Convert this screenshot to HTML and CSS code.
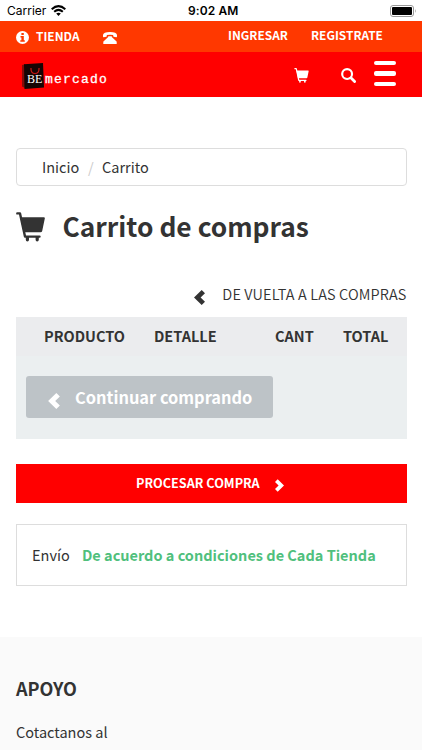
FILE: index.html
```html
<!DOCTYPE html>
<html lang="es">
<head>
<meta charset="utf-8">
<title>Carrito de compras</title>
<link rel="stylesheet" href="styles.css">
</head>
<body>
<svg width="0" height="0" class="defs">
  <symbol id="cart" viewBox="0 0 29 30"><path d="M1.3 1.4H4L9 24.6H23.5" fill="none" stroke="currentColor" stroke-width="2.4" stroke-linecap="round" stroke-linejoin="round"/><path d="M4.3 5.2H27.8Q29.1 5.2 28.8 6.4L26.2 19Q25.9 20.3 24.5 20.3H7.5ZM9.8 25H13V27.8A1.6 1.6 0 0 1 9.8 27.8ZM19.6 25H22.8V27.8A1.6 1.6 0 0 1 19.6 27.8Z" fill="currentColor"/></symbol>
  <symbol id="chevron" viewBox="0 0 11 15"><path d="M7.7 0L11 3.2L6.6 7.5L11 11.8L7.7 15L0 7.5Z" fill="currentColor"/></symbol>
</svg>
<div class="status">
  <span class="carrier">Carrier</span>
  <svg class="wifi" viewBox="0 0 15 11"><g fill="none" stroke="#000" stroke-width="2"><path d="M.7 4.2Q7.5-2 14.3 4.2"/><path d="M3.2 6.8Q7.5 3 11.8 6.8"/></g><path d="M5.2 8.6Q7.5 6.8 9.8 8.6L7.5 11Z"/></svg>
  <span class="time">9:02 AM</span>
  <svg class="battery" viewBox="0 0 27 12"><rect x=".5" y=".5" width="23" height="11" rx="2.5" fill="#fff" stroke="#999"/><rect x="2" y="2" width="20" height="8" rx="1"/><path d="M25 4Q26.6 6 25 8Z" fill="#999"/></svg>
</div>
<div class="topbar">
  <svg class="info" viewBox="0 0 13 13"><circle cx="6.5" cy="6.5" r="6.5" fill="#fff"/><path d="M5.4 2H7.8V4H5.4ZM4.5 5H7.8V9.2H8.8V10.7H4.3V9.2H5.4V6.4H4.5Z" fill="#ff3800"/></svg>
  <span class="tienda">TIENDA</span>
  <svg class="phone" viewBox="0 0 14 12"><path d="M0 4.6V3Q.3 0 7 0T14 3V4.6Q14 5.3 13.2 5.2L10.8 4.8Q10.2 4.7 10.2 4V3Q7 2.3 3.8 3V4Q3.8 4.7 3.2 4.8L.8 5.2Q0 5.3 0 4.6ZM5.2 4.2H8.8V5L13.3 9.2Q13.7 9.5 13.7 10V12H.3V10Q.3 9.5.7 9.2L5.2 5Z" fill="#fff"/></svg>
  <span class="login">INGRESAR</span>
  <span class="register">REGISTRATE</span>
</div>
<header class="header">
  <div class="logo">
    <svg class="bag" viewBox="0 0 22 26"><path d="M0 2L3 1.2V25L0 23.5Z" fill="#860b09"/><path d="M2 1.2L21 0L22 24.5L2.5 26Z" fill="#160504"/><path d="M9 5V6Q9 10.5 13 10.5T17 6V5" fill="none" stroke="#cc1715" stroke-width="1.2"/></svg>
    <span class="be">BE</span><span class="mercado">mercado</span>
  </div>
  <svg class="navcart"><use href="#cart"/></svg>
  <svg class="search" viewBox="0 0 14 14"><circle cx="5.7" cy="5.7" r="4.6" fill="none" stroke="#fff" stroke-width="2"/><path d="M9.2 9.2L12.7 12.7" stroke="#fff" stroke-width="2.6" stroke-linecap="round"/></svg>
  <div class="burger"><i></i><i></i><i></i></div>
</header>
<main>
  <nav class="crumb"><span class="inicio">Inicio</span><span class="slash">/</span><span class="here">Carrito</span></nav>
  <h1><svg class="bigcart"><use href="#cart"/></svg><span>Carrito de compras</span></h1>
  <div class="back"><svg class="chev"><use href="#chevron"/></svg><span>DE VUELTA A LAS COMPRAS</span></div>
  <section class="table">
    <div class="thead"><span class="c1">PRODUCTO</span><span class="c2">DETALLE</span><span class="c3">CANT</span><span class="c4">TOTAL</span></div>
    <div class="continue"><svg class="chev"><use href="#chevron"/></svg><span>Continuar comprando</span></div>
  </section>
  <div class="process"><span>PROCESAR COMPRA</span><svg class="chev"><use href="#chevron"/></svg></div>
  <div class="shipping"><span class="envio">Envío</span><strong>De acuerdo a condiciones de Cada Tienda</strong></div>
</main>
<footer><h2>APOYO</h2><p>Cotactanos al</p></footer>
</body>
</html>
```
FILE: styles.css
```css
* { box-sizing: border-box; }
body { margin: 0; width: 422px; height: 750px; overflow: hidden; background: #fff; color: #333; font-family: "Noto Sans CJK SC", sans-serif; font-size: 14.5px; }
svg { display: block; flex: none; }
.defs { position: absolute; }
span, strong { white-space: nowrap; flex: none; }
.status { height: 21px; display: flex; align-items: center; color: #000; font: 12px/21px Inter, sans-serif; }
.carrier { width: 39px; margin-left: 7px; }
.wifi { width: 15px; height: 11px; margin-left: 5px; }
.time { margin-left: 122px; width: 51px; font-weight: 600; letter-spacing: .1px; }
.battery { width: 27px; height: 12px; margin-left: 151px; }
.topbar { height: 31px; display: flex; background: #ff3800; color: #fff; font-size: 11.9px; font-weight: 700; line-height: 28px; }
.info { width: 13px; height: 13px; margin: 10px 0 0 16px; }
.tienda { margin-left: 7px; width: 44px; padding-top: 1px; }
.phone { width: 14px; height: 12px; margin: 11px 0 0 23px; }
.login { margin-left: 111px; width: 60px; }
.register { margin-left: 23px; }
.header { height: 45px; display: flex; background: #f00; color: #fff; }
.logo { width: 86px; margin: 11px 0 0 22px; display: flex; position: relative; }
.bag { width: 22px; height: 26px; }
.be { position: absolute; left: 5px; top: 8px; font: 12px/16px "Liberation Serif", serif; }
.mercado { font: 13px/17px "Liberation Mono", monospace; letter-spacing: 1.2px; margin: 8px 0 0 1px; -webkit-text-stroke: .3px #fff; }
.navcart { width: 15px; height: 15px; margin: 16px 0 0 186px; }
.search { width: 15px; height: 15px; margin: 16px 0 0 32px; }
.burger { width: 22px; margin: 9px 0 0 18px; display: flex; flex-direction: column; gap: 6px; }
.burger i { height: 4.4px; border-radius: 2px; background: #fff; }
main { padding: 51px 15.5px 0; }
.crumb { height: 38px; border: 1px solid #ddd; border-radius: 4px; display: flex; padding-left: 25.5px; line-height: 35px; }
.inicio { width: 37px; }
.slash { color: #ccc; margin-left: 9px; width: 14px; }
h1 { margin: 22px 0 0; height: 40px; display: flex; font-size: 26.35px; line-height: 35px; }
.bigcart { width: 29px; height: 30px; margin-top: 4px; }
h1 span { margin-left: 18px; }
.back { display: flex; justify-content: flex-end; margin-top: 34px; height: 35px; line-height: 24px; font-weight: 350; letter-spacing: .13px; }
.back .chev { width: 11px; height: 15px; margin: 8px 17px 0 0; }
.table { height: 122px; background: #ebeff0; }
.thead { height: 39px; background: #ebecee; font-weight: 700; line-height: 38px; display: grid; grid-template-columns: 110px 121px 68px 1fr; padding-left: 28.5px; }
.continue { width: 247px; height: 42px; margin: 20px 0 0 10px; background: #bdc3c7; color: #fff; border-radius: 3px; display: flex; line-height: 42px; font-size: 16.4px; font-weight: 700; }
.continue .chev { width: 12px; height: 16px; margin: 17px 15px 0 22.5px; }
.process { height: 39px; background: #f00; color: #fff; margin-top: 25px; display: flex; padding-left: 120.5px; font-size: 12.65px; font-weight: 700; line-height: 37px; }
.process .chev { width: 9px; height: 13px; margin: 15px 0 0 15px; transform: scaleX(-1); }
.shipping { height: 62px; border: 1px solid #ddd; margin-top: 21px; display: flex; padding-left: 15.5px; line-height: 59px; }
.envio { width: 50px; }
.shipping strong { color: #50c07d; }
footer { margin-top: 51px; height: 113px; background: #fafafa; padding: 36px 16px 0; }
h2 { margin: 0; font-size: 18px; line-height: 30px; }
p { margin: 17px 0 0; line-height: 24px; }
```
